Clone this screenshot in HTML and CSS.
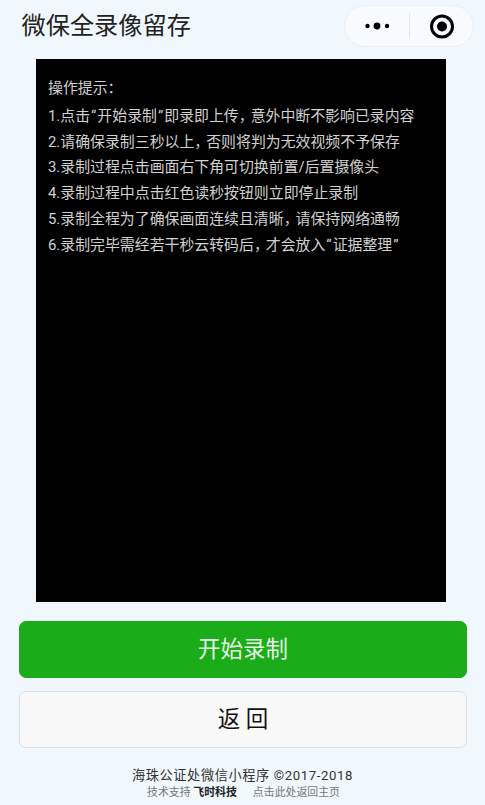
FILE: index.html
```html
<!DOCTYPE html>
<html lang="zh-CN">
<head>
<meta charset="utf-8">
<title>微保全录像留存</title>
<link rel="stylesheet" href="styles.css">
</head>
<body>
<div class="page">
  <header class="nav">
    <h1 class="title">微保全录像留存</h1>
    <div class="capsule">
      <div class="cap-cell">
        <svg width="28" height="10" viewBox="0 0 28 10"><circle cx="4.5" cy="5" r="2.2"/><circle cx="14" cy="5" r="3.4"/><circle cx="24" cy="5" r="2.2"/></svg>
      </div>
      <div class="cap-sep"></div>
      <div class="cap-cell">
        <svg class="cap-record" width="26" height="26" viewBox="0 0 26 26"><circle cx="14" cy="13.5" r="10.5" fill="none" stroke="#000" stroke-width="3"/><circle cx="14" cy="13.5" r="5"/></svg>
      </div>
    </div>
  </header>
  <main class="preview">
    <p class="tip tip-head">操作提示：</p>
    <p class="tip">1.点击<span class="qt">“</span>开始录制<span class="qt">”</span>即录即上传<span class="pc">，</span>意外中断不影响已录内容</p>
    <p class="tip">2.请确保录制三秒以上<span class="pc">，</span>否则将判为无效视频不予保存</p>
    <p class="tip">3.录制过程点击画面右下角可切换前置/后置摄像头</p>
    <p class="tip">4.录制过程中点击红色读秒按钮则立即停止录制</p>
    <p class="tip">5.录制全程为了确保画面连续且清晰<span class="pc">，</span>请保持网络通畅</p>
    <p class="tip">6.录制完毕需经若干秒云转码后<span class="pc">，</span>才会放入<span class="qt">“</span>证据整理<span class="qt">”</span></p>
  </main>
  <div class="actions">
    <button class="btn btn-primary">开始录制</button>
    <button class="btn btn-default">返 回</button>
  </div>
  <footer class="footer">
    <div class="copy">海珠公证处微信小程序 ©2017-2018</div>
    <div class="support"><span>技术支持 <b class="brand">飞时科技</b></span><span>点击此处返回主页</span></div>
  </footer>
</div>
</body>
</html>
```
FILE: styles.css
```css
html, body { margin: 0; padding: 0; }
body { background: #f0f7fd; font-family: "Roboto", "Noto Sans CJK SC", sans-serif; }
.page { width: 485px; height: 805px; overflow: hidden; display: flex; flex-direction: column; }
.nav { height: 59px; box-sizing: border-box; display: flex; justify-content: space-between; align-items: flex-start; padding: 5px 11px 0 21.5px; }
.title { margin: 0; font-size: 24.2px; font-weight: 400; line-height: 43px; color: #222; }
.capsule { width: 130px; height: 42px; box-sizing: border-box; display: flex; align-items: center; background: #f8fbfe; border: 1px solid #e9eff4; border-radius: 21px; }
.cap-cell { flex: 1; display: flex; justify-content: center; align-items: center; }
.cap-sep { width: 1px; height: 26px; background: #dfe4e8; }
.preview { width: 410px; height: 543px; margin-left: 36px; box-sizing: border-box; padding: 17px 12px 0; background: #000; }
.tip { margin: 0; font-size: 14.9px; line-height: 25.8px; color: #d0d0d0; white-space: nowrap; }
.tip-head { margin-bottom: 2px; }
.pc { letter-spacing: -3px; }
.qt { padding: 0 1px; }
.actions { display: flex; flex-direction: column; gap: 13px; padding: 19px 18px 0 19px; }
.btn { display: block; width: 100%; height: 57px; padding: 0 0 5px; box-sizing: border-box; font-family: inherit; font-size: 22.5px; border-radius: 7px; }
.btn-primary { border: 1px solid #1aad19; background: #1aad19; color: #e6f7e6; }
.btn-default { border: 1px solid #dcdfe0; background: #f8f8f8; color: #111; }
.footer { text-align: center; padding-top: 18px; }
.copy { font-size: 13.2px; line-height: 19px; color: #333; letter-spacing: .6px; }
.support { display: flex; justify-content: center; gap: 16px; padding-left: 2px; font-size: 10.9px; line-height: 16px; color: #777; }
.brand { color: #222; font-weight: 700; }
```
